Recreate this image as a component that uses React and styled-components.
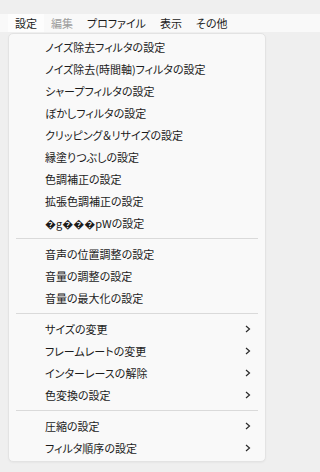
import React from 'react';
import styled, { createGlobalStyle } from 'styled-components';

const Global = createGlobalStyle`
    html, body {
        margin: 0;
        padding: 0;
        background: #efefef;
    }
    body {
        font-family: "Noto Sans CJK JP", "Noto Sans", sans-serif;
        font-size: 11px;
        color: #1b1b1b;
        font-feature-settings: "palt";
    }
`

const Page = styled.div`
    height: 472px;
    padding-top: 14px;
    box-sizing: border-box;
`

const MenuBar = styled.nav`
    display: flex;
    align-items: center;
    height: 18px;
    padding-left: 8px;
    background: #f9f9f9;
`

const BarItem = styled.div`
    padding: 0 7px;
    line-height: 18px;
    color: ${props => props.disabled ? '#9d9d9d' : '#1b1b1b'};
    background: ${props => props.active ? '#fdfdfd' : 'transparent'};
`

const Popup = styled.div`
    margin: 1px 0 0 8px;
    width: 258px;
    box-sizing: border-box;
    background: #f9f9f9;
    border: 1px solid #e3e3e3;
    border-radius: 5px;
    padding: 2px 0;
    box-shadow: 0 1px 2px rgba(0, 0, 0, 0.04);
`

const Item = styled.div`
    display: flex;
    align-items: center;
    justify-content: space-between;
    height: 22px;
    padding: 0 14px 0 36px;
    white-space: nowrap;
`

const Separator = styled.div`
    height: 1px;
    margin: 4px 7px;
    background: #dadada;
`

const Chevron = () => (
    <svg width="6" height="8" viewBox="0 0 6 8">
        <path d="M1 1 L4.5 4 L1 7" fill="none" stroke="#2a2a2a" strokeWidth="1.2" />
    </svg>
);

const groups = [
    [
        'ノイズ除去フィルタの設定',
        'ノイズ除去(時間軸)フィルタの設定',
        'シャープフィルタの設定',
        'ぼかしフィルタの設定',
        'クリッピング＆リサイズの設定',
        '縁塗りつぶしの設定',
        '色調補正の設定',
        '拡張色調補正の設定',
        '\uFFFDg\uFFFD\uFFFD\uFFFDpWの設定',
    ],
    [
        '音声の位置調整の設定',
        '音量の調整の設定',
        '音量の最大化の設定',
    ],
    [
        'サイズの変更',
        'フレームレートの変更',
        'インターレースの解除',
        '色変換の設定',
    ],
    [
        '圧縮の設定',
        'フィルタ順序の設定',
    ],
];

function App() {
    return (
        <>
            <Global />
            <Page>
                <MenuBar>
                    <BarItem active>設定</BarItem>
                    <BarItem disabled>編集</BarItem>
                    <BarItem>プロファイル</BarItem>
                    <BarItem>表示</BarItem>
                    <BarItem>その他</BarItem>
                </MenuBar>
                <Popup>
                    {groups.map((group, gi) => (
                        <React.Fragment key={gi}>
                            {gi > 0 && <Separator />}
                            {group.map(label => (
                                <Item key={label}>
                                    <span>{label}</span>
                                    {gi >= 2 && <Chevron />}
                                </Item>
                            ))}
                        </React.Fragment>
                    ))}
                </Popup>
            </Page>
        </>
    );
}

export default App;
